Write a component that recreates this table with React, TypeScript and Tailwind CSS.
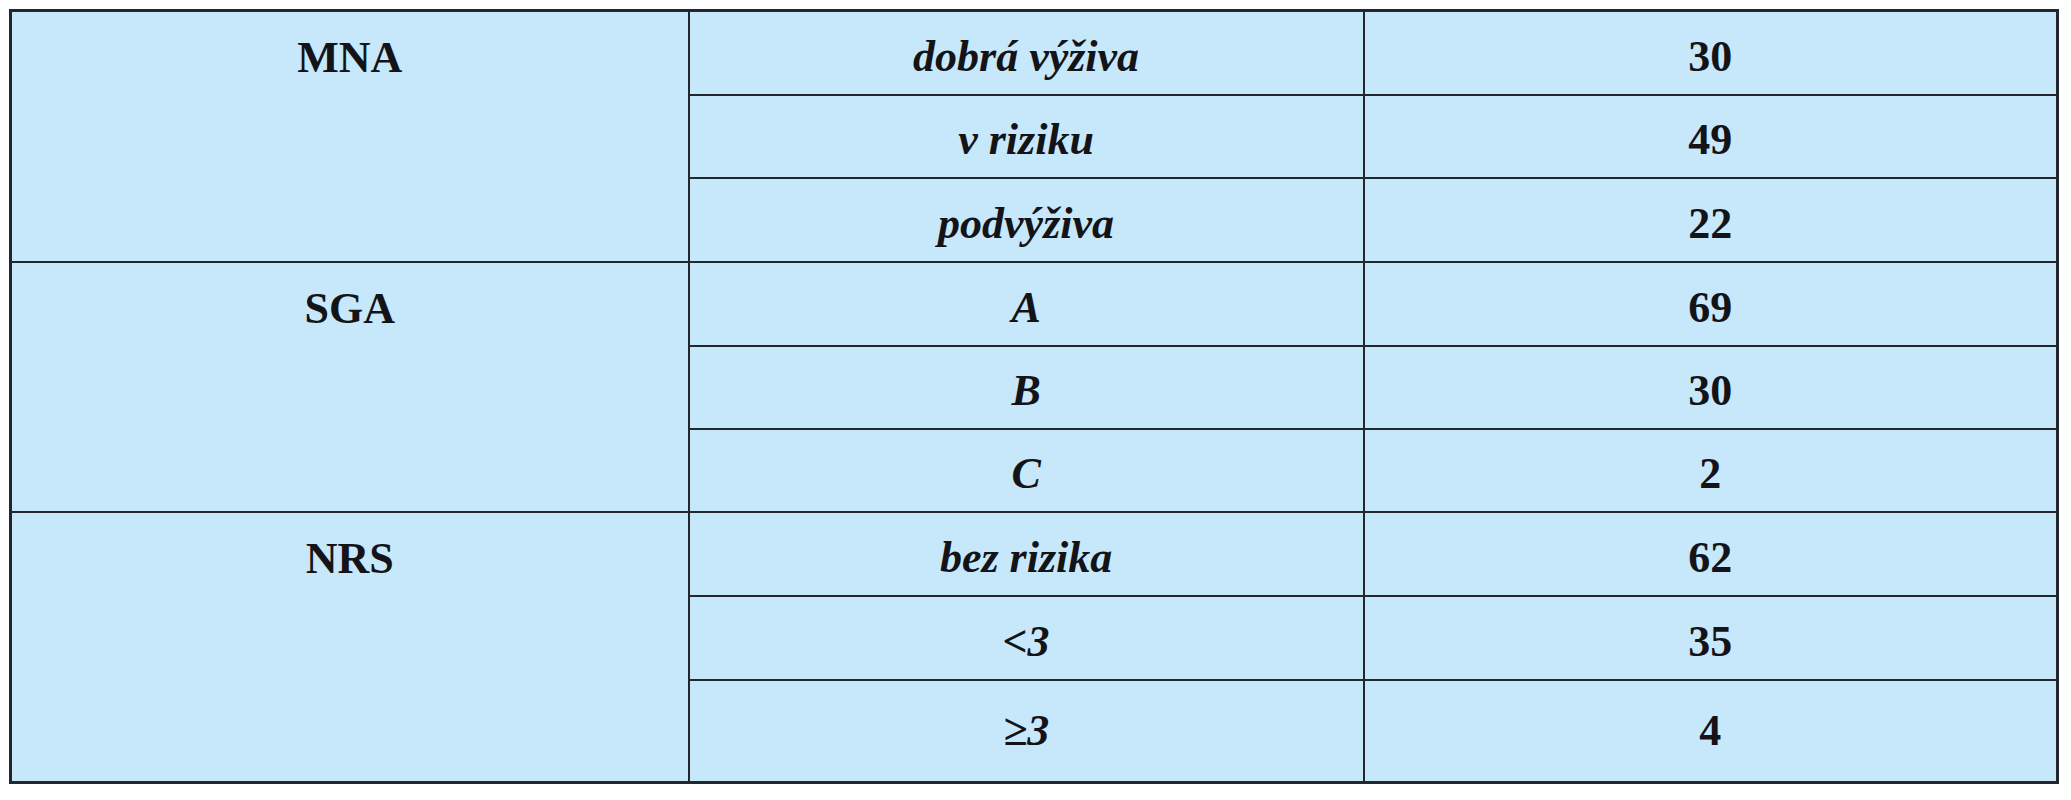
import React from 'react';

type Group = {
  name: string;
  rows: { label: string; value: string }[];
};

const groups: Group[] = [
  {
    name: 'MNA',
    rows: [
      { label: 'dobrá výživa', value: '30' },
      { label: 'v riziku', value: '49' },
      { label: 'podvýživa', value: '22' },
    ],
  },
  {
    name: 'SGA',
    rows: [
      { label: 'A', value: '69' },
      { label: 'B', value: '30' },
      { label: 'C', value: '2' },
    ],
  },
  {
    name: 'NRS',
    rows: [
      { label: 'bez rizika', value: '62' },
      { label: '<3', value: '35' },
      { label: '≥3', value: '4' },
    ],
  },
];

// row heights, top to bottom
const heights = [
  'h-[84px]', 'h-[83px]', 'h-[84px]',
  'h-[84px]', 'h-[83px]', 'h-[83px]',
  'h-[84px]', 'h-[84px]', 'h-[103px]',
];

export default function App() {
  return (
    <div
      className="w-[2071px] h-[800px] bg-white pt-[9px] pl-[9px]"
      style={{ fontFamily: '"Liberation Serif", "Times New Roman", serif' }}
    >
      <table className="w-[2050px] border-collapse border-[3px] border-[#23262c] bg-[#c6e8fa] text-[#141418] text-[44px] font-bold leading-none">
        <colgroup>
          <col className="w-[679px]" />
          <col className="w-[676px]" />
          <col className="w-[695px]" />
        </colgroup>
        <tbody>
          {groups.map((g, gi) =>
            g.rows.map((r, ri) => {
              const last = gi === groups.length - 1 && ri === g.rows.length - 1;
              return (
                <tr key={g.name + ri} className={heights[gi * 3 + ri]}>
                  {ri === 0 && (
                    <td rowSpan={3} className="border-2 border-[#23262c] align-top p-0">
                      <div className="h-[84px] flex items-center justify-center pt-[8px]">{g.name}</div>
                    </td>
                  )}
                  <td className={`border-2 border-[#23262c] text-center italic p-0 ${last ? 'pt-0' : 'pt-[8px]'}`}>{r.label}</td>
                  <td className={`border-2 border-[#23262c] text-center p-0 ${last ? 'pt-0' : 'pt-[8px]'}`}>{r.value}</td>
                </tr>
              );
            })
          )}
        </tbody>
      </table>
    </div>
  );
}
